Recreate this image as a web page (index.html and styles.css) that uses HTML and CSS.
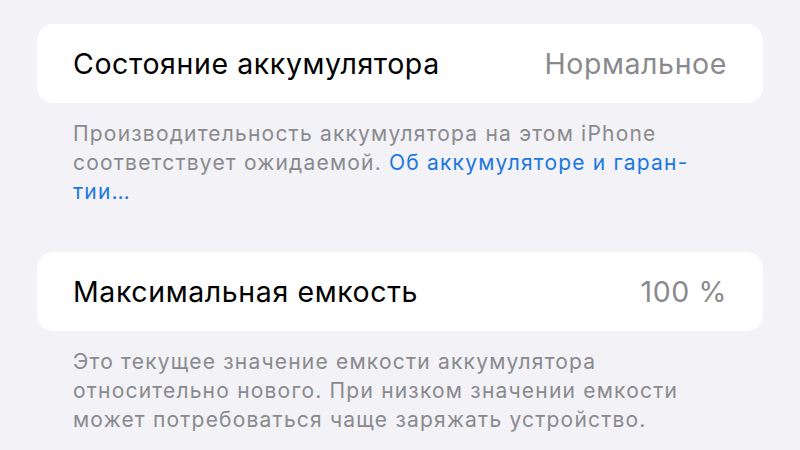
FILE: index.html
```html
<!DOCTYPE html>
<html lang="ru">
<head>
    <meta charset="UTF-8">
    <meta name="viewport" content="width=device-width, initial-scale=1.0">
    <title>Аккумулятор</title>
    <link rel="stylesheet" href="styles.css">
</head>
<body>
    <div class="page">
        <div class="cell">
            <span class="cell-title">Состояние аккумулятора</span>
            <span class="cell-value">Нормальное</span>
        </div>
        <p class="footer">
            Производительность аккумулятора на этом iPhone<br>
            соответствует ожидаемой. <a href="#" class="link">Об аккумуляторе и гаран-<br>тии…</a>
        </p>

        <div class="cell">
            <span class="cell-title">Максимальная емкость</span>
            <span class="cell-value">100 %</span>
        </div>
        <p class="footer footer-last">
            Это текущее значение емкости аккумулятора<br>
            относительно нового. При низком значении емкости<br>
            может потребоваться чаще заряжать устройство.
        </p>
    </div>
</body>
</html>
```

FILE: styles.css
```css
body {
    margin: 0;
    padding: 0;
    background: #f2f2f7;
    font-family: Inter, "Noto Sans", sans-serif;
    color: #000;
}

.page {
    padding: 24px 37px 0;
}

.cell {
    background: #fff;
    border-radius: 16px;
    height: 79px;
    padding: 0 36px;
    display: flex;
    align-items: center;
    justify-content: space-between;
    font-size: 28.5px;
    letter-spacing: 0.6px;
}

.cell-value {
    color: #8a8a8e;
}

.footer {
    margin: 0;
    padding: 16px 36px 0;
    height: 149px;
    box-sizing: border-box;
    font-size: 21px;
    line-height: 29px;
    letter-spacing: 1.2px;
    color: #8a8a8e;
}

.footer-last {
    height: auto;
}

.link {
    color: #1a78e0;
    text-decoration: none;
}
```
